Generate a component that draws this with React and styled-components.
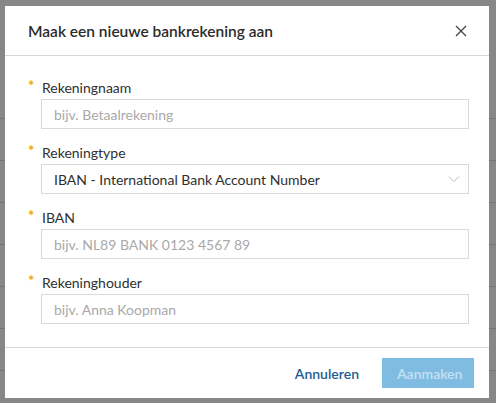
import { createGlobalStyle, styled } from "styled-components";

const GlobalStyle = createGlobalStyle`
    html, body {
        margin: 0;
        padding: 0;
    }
    body {
        font-family: Lato, "Open Sans", sans-serif;
        color: #2f2f2f;
        background: #878787;
    }
`;

const Page = styled.div`
    width: 100%;
    height: 403px;
    background: #878787;
    padding-top: 118px;
    box-sizing: border-box;
    overflow: hidden;
`;

const PageRow = styled.div`
    height: 41px;
    border-top: 1px solid #747474;
`;

const Overlay = styled.div`
    position: fixed;
    inset: 0;
    display: flex;
    align-items: flex-start;
    padding: 6px 0 0 5px;
`;

const Dialog = styled.div`
    width: 484px;
    background: #fff;
    display: flex;
    flex-direction: column;
`;

const Header = styled.div`
    height: 50px;
    display: flex;
    align-items: center;
    justify-content: space-between;
    padding: 0 21px 0 23px;
    border-bottom: 1px solid #d8d8d8;
    box-sizing: border-box;
`;

const Title = styled.h2`
    margin: 0;
    font-size: 15.5px;
    font-weight: 600;
    color: #2b2b2b;
`;

const CloseButton = styled.button`
    border: 0;
    background: none;
    padding: 0;
    width: 14px;
    height: 14px;
    display: flex;
    cursor: pointer;
`;

const Body = styled.div`
    padding: 23px 20px 23px 23px;
    display: flex;
    flex-direction: column;
    gap: 15px;
`;

const Field = styled.div`
    display: grid;
    grid-template-columns: 13px 1fr;
    row-gap: 2px;
`;

const Required = styled.span`
    color: #f0a00c;
    font-size: 15px;
    font-weight: 700;
    line-height: 12px;
`;

const Label = styled.label`
    font-size: 14px;
    line-height: 18px;
    padding-left: 1px;
    color: #2f2f2f;
`;

const Input = styled.input`
    grid-column: 2;
    height: 30px;
    box-sizing: border-box;
    border: 1px solid #d9d9d9;
    padding: 0 12px;
    font-family: inherit;
    font-size: 14px;
    color: #333;
    outline: none;
    &::placeholder {
        color: #a9a9a9;
    }
`;

const Select = styled.div`
    grid-column: 2;
    height: 30px;
    box-sizing: border-box;
    border: 1px solid #d9d9d9;
    padding: 0 8px 0 12px;
    display: flex;
    align-items: center;
    justify-content: space-between;
    font-size: 14px;
    color: #2f2f2f;
`;

const Footer = styled.div`
    border-top: 1px solid #d8d8d8;
    padding: 10px 15px 10px;
    display: flex;
    justify-content: flex-end;
    gap: 8px;
`;

const Button = styled.button`
    height: 30px;
    padding: 0 15px;
    border: 0;
    font-family: inherit;
    font-size: 14px;
    font-weight: 600;
    cursor: pointer;
    background: ${({ $primary }) => ($primary ? "#80bce2" : "transparent")};
    color: ${({ $primary }) => ($primary ? "#c4e1f3" : "#1d5d90")};
    width: ${({ $primary }) => ($primary ? "92px" : "auto")};
`;

const fields = [
    { label: "Rekeningnaam", placeholder: "bijv. Betaalrekening" },
    { label: "Rekeningtype", select: "IBAN - International Bank Account Number" },
    { label: "IBAN", placeholder: "bijv. NL89 BANK 0123 4567 89" },
    { label: "Rekeninghouder", placeholder: "bijv. Anna Koopman" },
];

export default function App() {
    return (
        <>
            <GlobalStyle />
            <Page>
                {[...Array(7)].map((_, i) => (
                    <PageRow key={i} />
                ))}
            </Page>
            <Overlay>
                <Dialog>
                    <Header>
                        <Title>Maak een nieuwe bankrekening aan</Title>
                        <CloseButton aria-label="Sluiten">
                            <svg width="14" height="14" viewBox="0 0 14 14">
                                <path
                                    d="M2 2 L12 12 M12 2 L2 12"
                                    stroke="#444"
                                    strokeWidth="1.3"
                                    fill="none"
                                />
                            </svg>
                        </CloseButton>
                    </Header>
                    <Body>
                        {fields.map(({ label, placeholder, select }) => (
                            <Field key={label}>
                                <Required>*</Required>
                                <Label>{label}</Label>
                                {select ? (
                                    <Select>
                                        <span>{select}</span>
                                        <svg width="12" height="8" viewBox="0 0 12 8">
                                            <path
                                                d="M1 1.5 L6 6.5 L11 1.5"
                                                stroke="#bdbdbd"
                                                strokeWidth="1"
                                                fill="none"
                                            />
                                        </svg>
                                    </Select>
                                ) : (
                                    <Input placeholder={placeholder} />
                                )}
                            </Field>
                        ))}
                    </Body>
                    <Footer>
                        <Button>Annuleren</Button>
                        <Button $primary disabled>
                            Aanmaken
                        </Button>
                    </Footer>
                </Dialog>
            </Overlay>
        </>
    );
}
